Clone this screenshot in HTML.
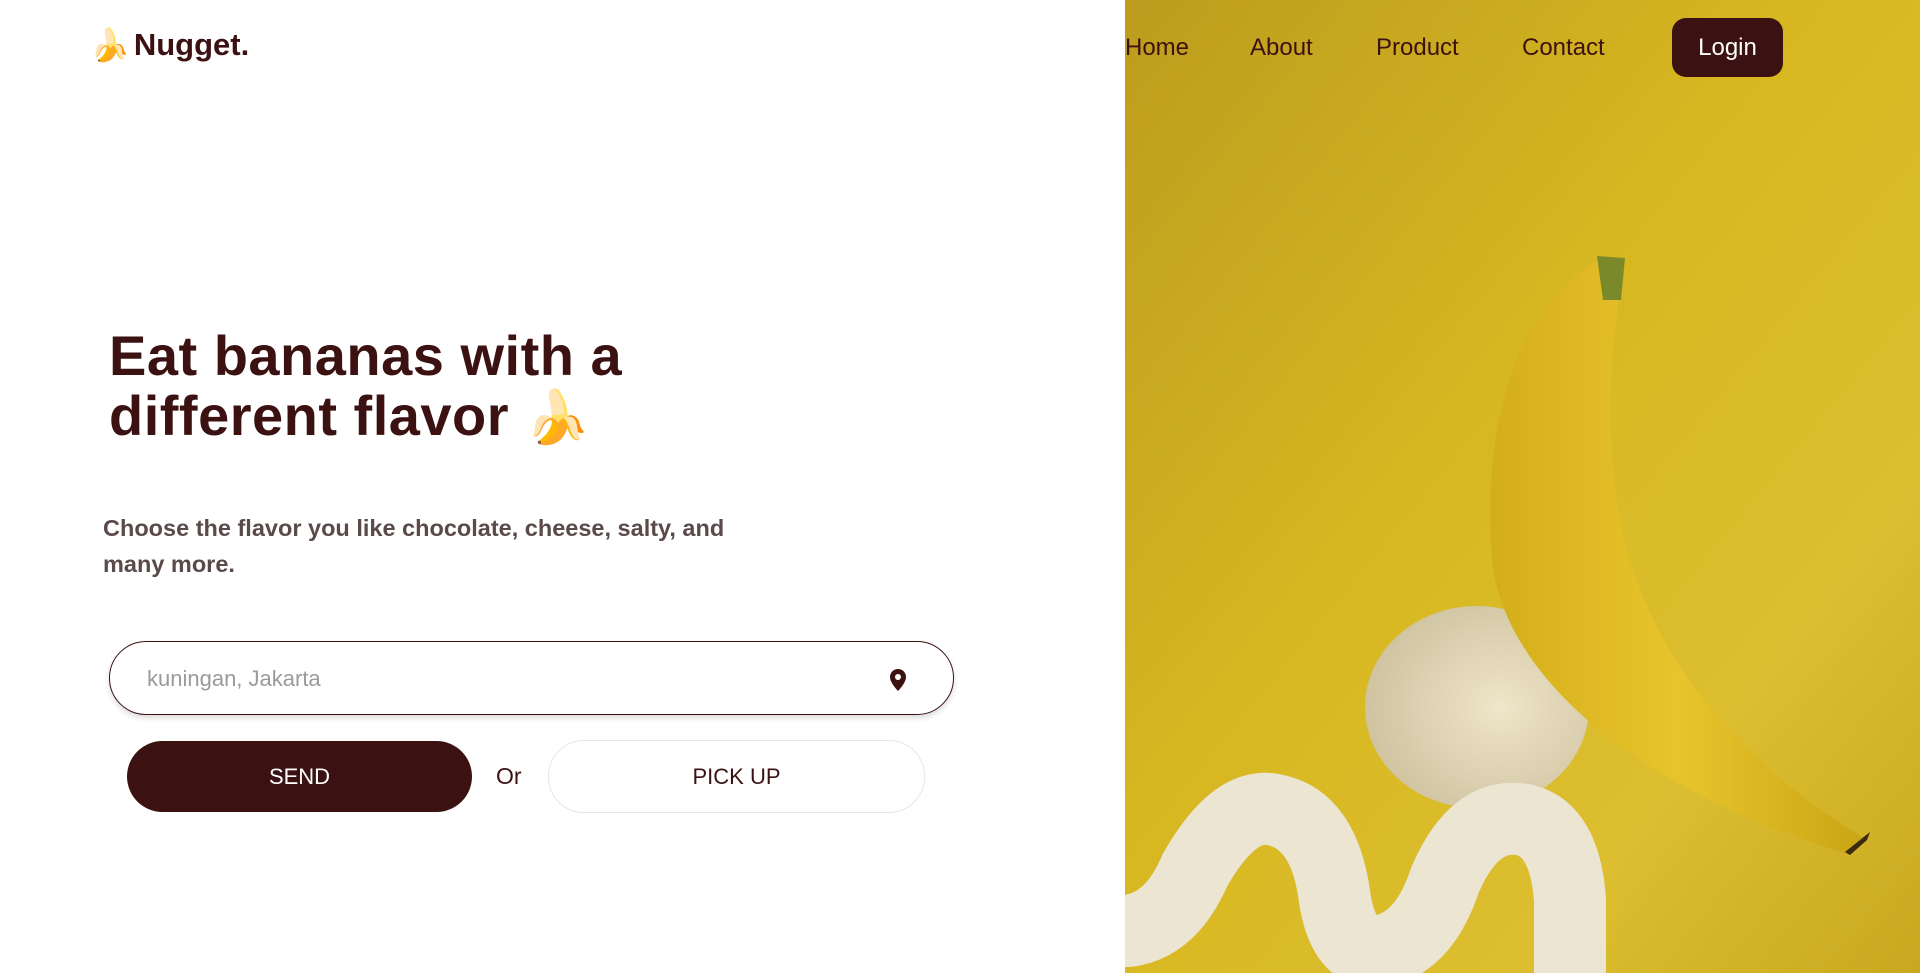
<!DOCTYPE html>
<html><head><meta charset="utf-8"><style>
*{margin:0;padding:0;box-sizing:border-box}
body{width:1920px;height:973px;overflow:hidden;background:#fff;font-family:"Liberation Sans",sans-serif;color:#3b1111;position:relative}
.logo{position:absolute;left:90px;top:26px;font-size:31px;font-weight:700;display:flex;align-items:center;gap:4px;color:#3b1111}
.nav{position:absolute;top:34px;font-size:24px;color:#3b1111}
.login{position:absolute;left:1672px;top:18px;width:111px;height:59px;background:#3b1111;color:#fff;border-radius:14px;font-size:24px;display:flex;align-items:center;justify-content:center}
h1{position:absolute;left:109px;top:326px;font-size:56px;line-height:60px;font-weight:700;color:#3b1111;letter-spacing:0.5px}
.sub{position:absolute;left:103px;top:510px;font-size:23.5px;line-height:36px;font-weight:700;color:#5b4a4a;width:680px}
.inp{position:absolute;left:109px;top:641px;width:845px;height:74px;border:1.5px solid #3b1111;border-radius:37px;box-shadow:0 3px 6px rgba(0,0,0,.15)}
.inp span{position:absolute;left:37px;top:24px;font-size:22px;color:#9a9a9a}
.btn{position:absolute;top:741px;height:71px;border-radius:36px;font-size:22px;display:flex;align-items:center;justify-content:center}
.send{left:127px;width:345px;background:#3b1111;color:#fff}
.pick{left:548px;width:377px;border:1.5px solid #e6e6e6;color:#3b1111;top:740px;height:73px}
.or{position:absolute;left:496px;top:763px;font-size:23px;color:#3b1111}
svg.photo{position:absolute;left:1125px;top:0}
</style></head><body>
<svg class="photo" width="795" height="973" viewBox="0 0 795 973">
<defs>
<linearGradient id="bg" x1="0" y1="0" x2="1" y2="1"><stop offset="0" stop-color="#bd9c1e"/><stop offset=".45" stop-color="#d8b821"/><stop offset=".75" stop-color="#dcbe30"/><stop offset="1" stop-color="#c9a81f"/></linearGradient>
<linearGradient id="bn" x1="0" y1="0" x2="1" y2="0"><stop offset="0" stop-color="#d4ae1a"/><stop offset=".5" stop-color="#e8c42c"/><stop offset="1" stop-color="#c9a515"/></linearGradient>
<radialGradient id="eg" cx=".6" cy=".5" r=".6"><stop offset="0" stop-color="#efe5c8"/><stop offset="1" stop-color="#cfc3a0"/></radialGradient>
</defs>
<rect width="795" height="973" fill="url(#bg)"/>
<ellipse cx="352" cy="707" rx="112" ry="101" fill="url(#eg)"/>
<path d="M470,262 C405,300 355,400 367,560 C380,680 515,790 725,855 L742,840 C640,780 540,680 505,560 C475,460 485,340 500,262 Z" fill="url(#bn)"/>
<path d="M725,855 L742,840 L745,832 L720,852 Z" fill="#3a2a10"/>
<path d="M472,256 L500,258 L496,300 L478,300 Z" fill="#7a8a2a"/>
<path d="M-20,930 Q 40,940 70,870 Q 110,800 150,810 Q 200,820 210,900 Q 220,960 260,950 Q 300,940 320,880 Q 350,810 400,820 Q 440,830 445,900 L 445,1000" fill="none" stroke="#ebe5d2" stroke-width="72" stroke-linecap="round"/>
</svg>
<div class="logo"><span style="font-size:32px">🍌</span>Nugget.</div>
<div class="nav" style="left:1125px">Home</div>
<div class="nav" style="left:1250px">About</div>
<div class="nav" style="left:1376px">Product</div>
<div class="nav" style="left:1522px">Contact</div>
<div class="login">Login</div>
<h1>Eat bananas with a<br>different flavor <span style="font-size:52px">🍌</span></h1>
<div class="sub">Choose the flavor you like chocolate, cheese, salty, and many more.</div>
<div class="inp"><span>kuningan, Jakarta</span>
<svg style="position:absolute;left:778px;top:26px" width="20" height="24" viewBox="0 0 20 24"><path d="M10 1C5 1 2 5 2 9c0 6 8 14 8 14s8-8 8-14c0-4-3-8-8-8z" fill="#3b1111"/><circle cx="10" cy="9" r="3" fill="#fff"/></svg></div>
<div class="btn send">SEND</div>
<div class="or">Or</div>
<div class="btn pick">PICK UP</div>
</body></html>
